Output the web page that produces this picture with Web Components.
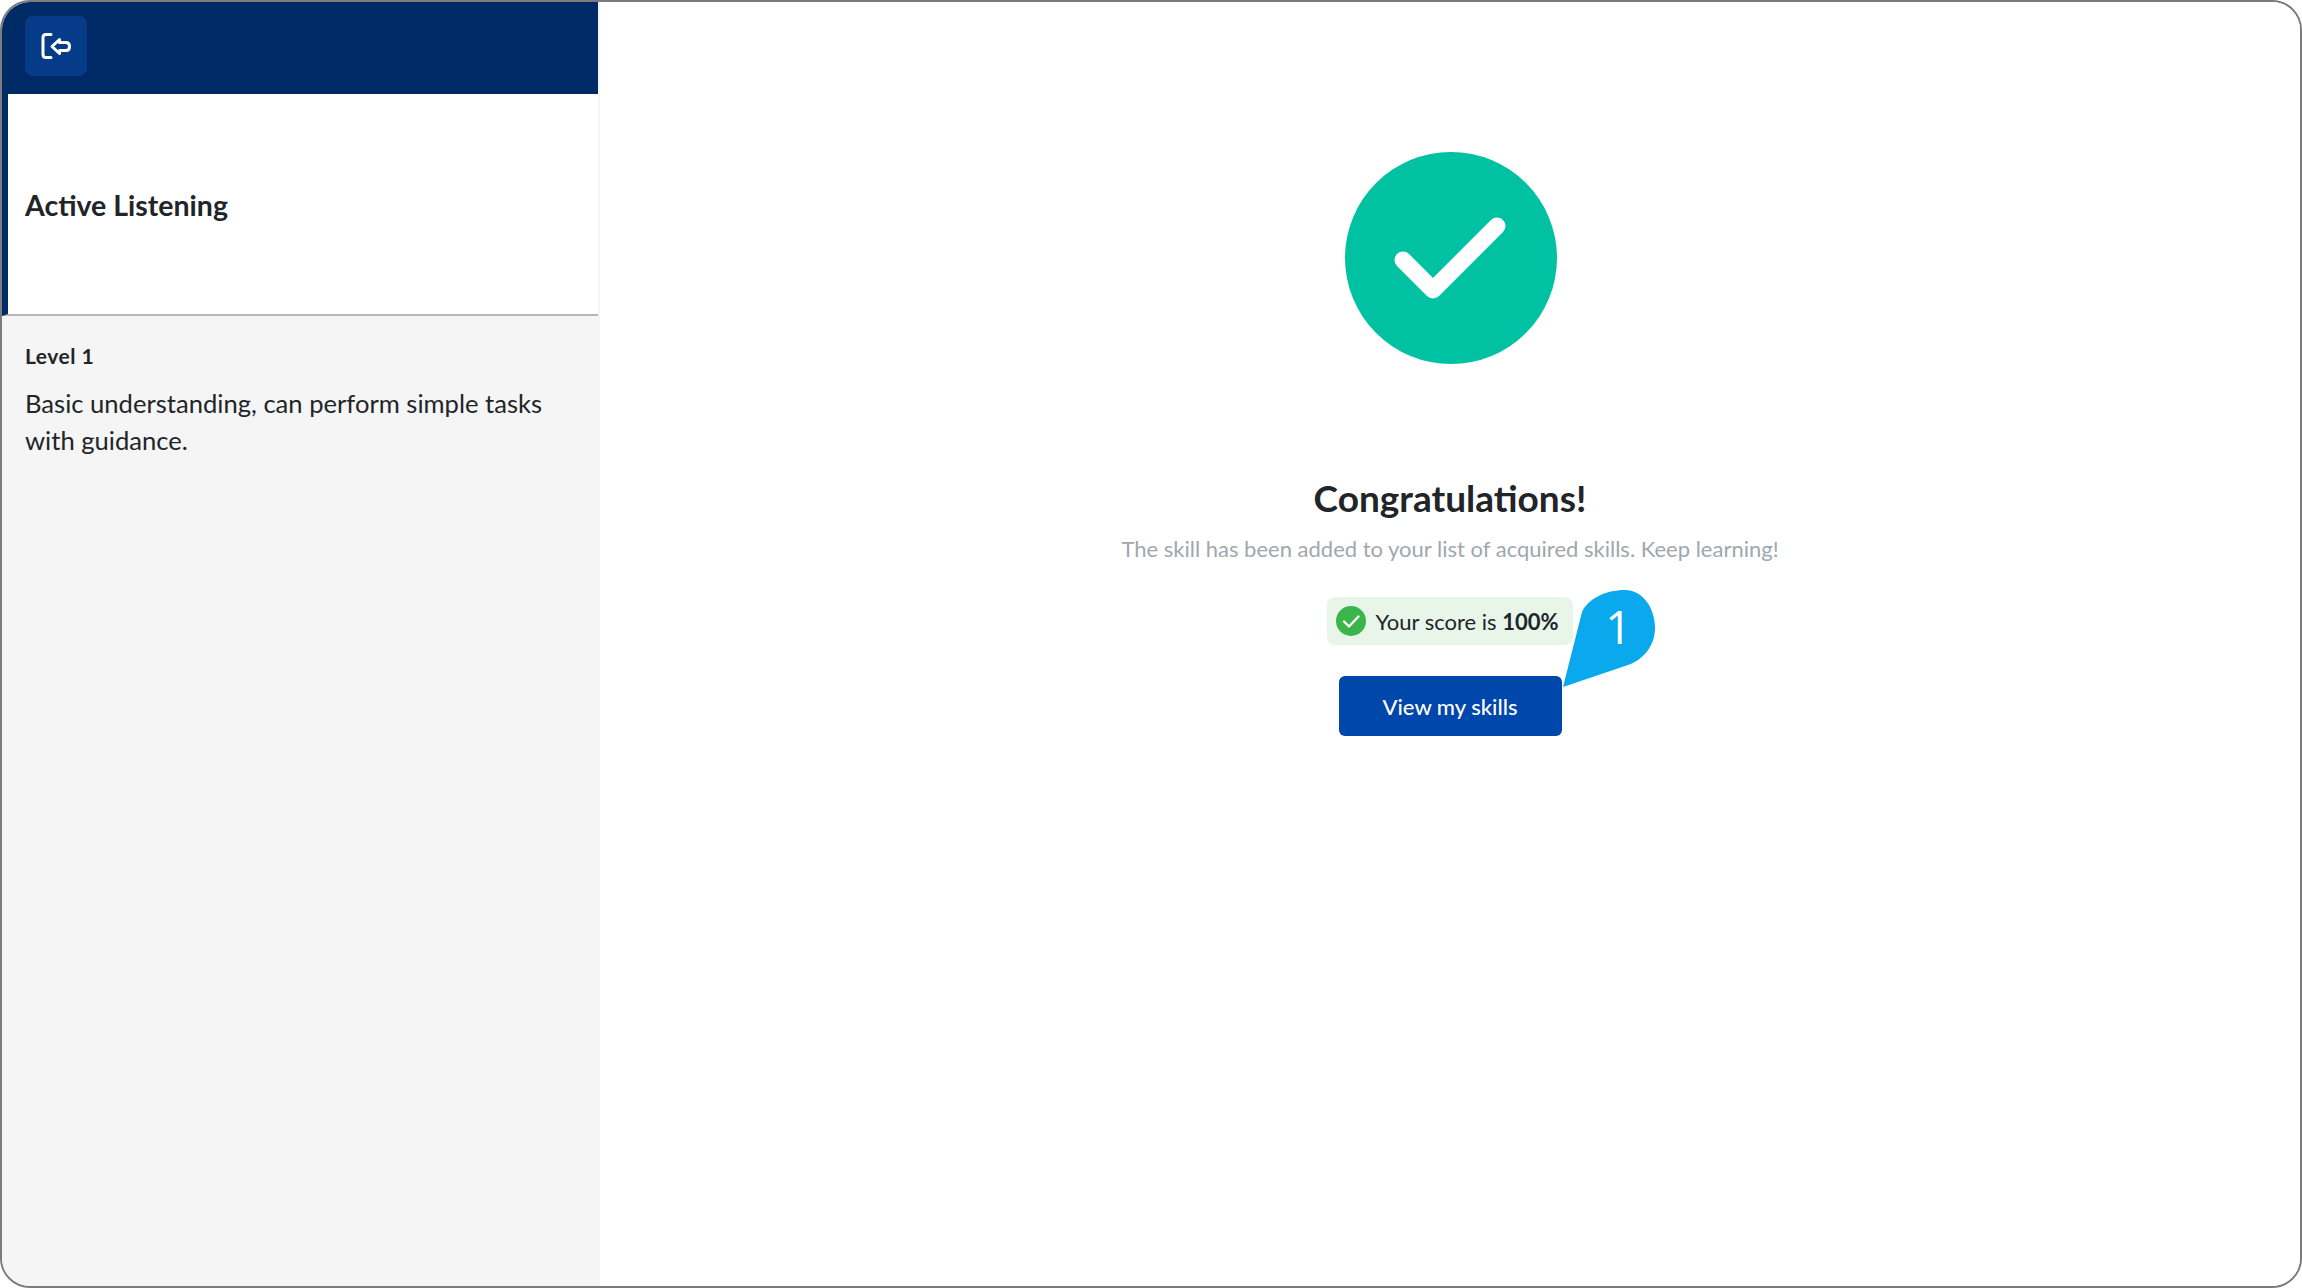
<!DOCTYPE html>
<html lang="en">
<head>
<meta charset="utf-8">
<title>Skill result</title>
<style>
  html, body { margin: 0; height: 100%; background: #fff; }
  body { font-family: Lato, "Noto Sans", sans-serif; color: #212529; }
</style>
</head>
<body>
<app-frame>
  <side-panel slot="side" skill="Active Listening" level="Level 1">
    Basic understanding, can perform simple tasks with guidance.
  </side-panel>
  <result-panel>
    <score-badge slot="score">Your score is <b>100%</b></score-badge>
    <coach-pin slot="pin" number="1"></coach-pin>
  </result-panel>
</app-frame>

<script>
class AppFrame extends HTMLElement {
  constructor() {
    super();
    this.attachShadow({ mode: 'open' });
    this.shadowRoot.innerHTML = `
    <style>
      :host {
        display: flex;
        box-sizing: border-box;
        height: 100vh;
        border: 2px solid #7b7b7b;
        border-radius: 30px;
        overflow: hidden;
        background: #fff;
      }
      ::slotted(side-panel) { flex: 0 0 598px; }
      ::slotted(result-panel) { flex: 1; }
    </style>
    <slot name="side"></slot>
    <slot></slot>
    `;
  }
}

class SidePanel extends HTMLElement {
  constructor() {
    super();
    this.attachShadow({ mode: 'open' });
    const skill = this.getAttribute('skill');
    const level = this.getAttribute('level');
    this.shadowRoot.innerHTML = `
    <style>
      :host { display: flex; flex-direction: column; background: #f5f5f5; }
      .top {
        height: 92px;
        flex: none;
        box-sizing: border-box;
        margin-right: 2px;
        padding: 14px 23px;
        background: #002a66;
      }
      .exit {
        display: flex;
        align-items: center;
        justify-content: center;
        width: 62px;
        height: 60px;
        padding: 0;
        border: 0;
        border-radius: 8px;
        background: #063b8a;
      }
      .skill {
        display: flex;
        align-items: center;
        flex: none;
        box-sizing: border-box;
        height: 222px;
        margin-right: 2px;
        padding: 2px 0 0 17px;
        border-left: 6px solid #002a66;
        border-bottom: 2px solid #b4b8bc;
        background: #fff;
        font-size: 28.500px;
        font-weight: 700;
      }
      .body { padding: 26px 23px; }
      .level { font-size: 21px; letter-spacing: 0.500px; font-weight: 700; line-height: 28px; }
      .desc { margin-top: 15px; font-size: 25.600px; line-height: 37px; }
    </style>
    <div class="top">
      <button class="exit" aria-label="Exit">
        <svg width="32" height="32" viewBox="0 0 32 32" fill="none" stroke="#fff" stroke-width="3" stroke-linecap="round" stroke-linejoin="round">
          <path d="M11 4.500H6Q3 4.500 3 7.500V24.500Q3 27.500 6 27.500H11"/>
          <path d="M12 16.500L19.500 9.500V12.500H26Q29.500 12.500 29.500 16.500Q29.500 20.500 26 20.500H19.500V23.500Z"/>
        </svg>
      </button>
    </div>
    <div class="skill">${skill}</div>
    <div class="body">
      <div class="level">${level}</div>
      <div class="desc"><slot></slot></div>
    </div>
    `;
  }
}

class ResultPanel extends HTMLElement {
  constructor() {
    super();
    this.attachShadow({ mode: 'open' });
    this.shadowRoot.innerHTML = `
    <style>
      :host {
        display: flex;
        flex-direction: column;
        align-items: center;
        box-sizing: border-box;
        padding-top: 150px;
        background: #fff;
      }
      .mark { display: block; width: 212px; height: 212px; margin-left: 2px; }
      h1 {
        margin: 111px 0 0;
        font-size: 37px;
        line-height: 46px;
        font-weight: 700;
        color: #212529;
      }
      p {
        margin: 12px 0 0;
        font-size: 22px;
        line-height: 32px;
        color: #a0a7ad;
      }
      ::slotted(score-badge) { margin-top: 32px; }
      .action { position: relative; margin-top: 31px; }
      button {
        display: block;
        width: 223px;
        height: 60px;
        padding: 0;
        border: 0;
        border-radius: 6px;
        background: #0047ab;
        color: #fff;
        font: 500 22px Lato, "Noto Sans", sans-serif;
      }
    </style>
    <svg class="mark" viewBox="0 0 212 212">
      <circle cx="106" cy="106" r="106" fill="#00c2a2"/>
      <path d="M58 108L88 138L152 74" fill="none" stroke="#fff" stroke-width="17" stroke-linecap="round" stroke-linejoin="round"/>
    </svg>
    <h1>Congratulations!</h1>
    <p>The skill has been added to your list of acquired skills. Keep learning!</p>
    <slot name="score"></slot>
    <div class="action">
      <button>View my skills</button>
      <slot name="pin"></slot>
    </div>
    `;
  }
}

class ScoreBadge extends HTMLElement {
  constructor() {
    super();
    this.attachShadow({ mode: 'open' });
    this.shadowRoot.innerHTML = `
    <style>
      :host {
        display: flex;
        align-items: center;
        gap: 9px;
        box-sizing: border-box;
        height: 48px;
        padding: 0 14px 0 9px;
        border-radius: 8px;
        background: #e8f5e9;
        font-size: 22px;
        color: #212529;
      }
      svg { display: block; flex: none; }
    </style>
    <svg width="30" height="30" viewBox="0 0 30 30">
      <circle cx="15" cy="15" r="15" fill="#39b54a"/>
      <path d="M8 15.500L13 20.500L22.500 10.500" fill="none" stroke="#fff" stroke-width="2.400" stroke-linecap="round" stroke-linejoin="round"/>
    </svg>
    <span><slot></slot></span>
    `;
  }
}

class CoachPin extends HTMLElement {
  constructor() {
    super();
    this.attachShadow({ mode: 'open' });
    this.shadowRoot.innerHTML = `
    <style>
      :host {
        position: absolute;
        left: 224px;
        top: -86px;
        width: 94px;
        height: 98px;
      }
      svg { position: absolute; inset: 0; display: block; }
      span {
        position: absolute;
        left: 33px;
        top: 8px;
        width: 46px;
        text-align: center;
        font: 400 46px/56px "Open Sans", sans-serif;
        color: #fff;
      }
    </style>
    <svg width="94" height="98" viewBox="0 0 94 98">
      <path d="M0 97L19 22C25 9 42 0 62 0C79 0 92 17 92 38C92 56 80 70 65 75Z" fill="#0aa9ee"/>
    </svg>
    <span>${this.getAttribute('number')}</span>
    `;
  }
}

customElements.define('app-frame', AppFrame);
customElements.define('side-panel', SidePanel);
customElements.define('result-panel', ResultPanel);
customElements.define('score-badge', ScoreBadge);
customElements.define('coach-pin', CoachPin);
</script>
</body>
</html>
